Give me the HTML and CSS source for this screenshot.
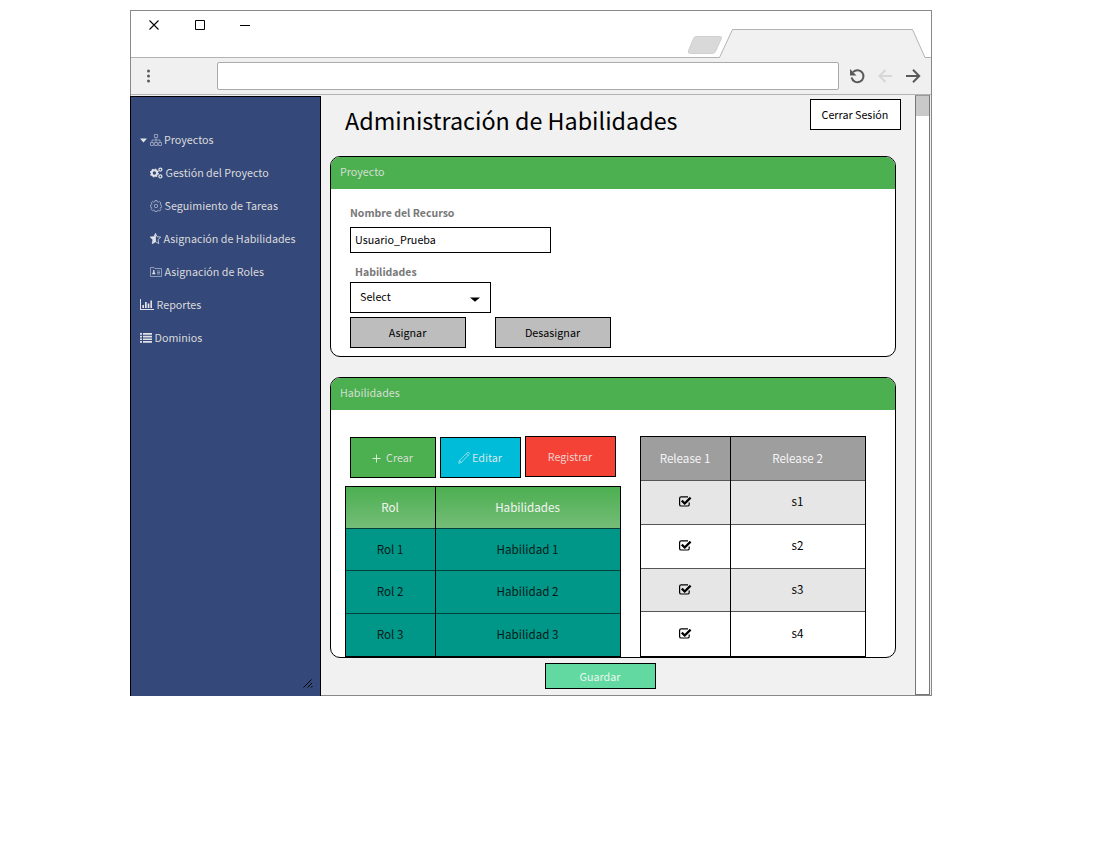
FILE: index.html
```html
<!DOCTYPE html>
<html lang="es">
<head>
<meta charset="utf-8">
<title>Administración de Habilidades</title>
<link rel="stylesheet" href="styles.css">
</head>
<body>
<div class="window">
  <div class="titlebar">
    <svg class="chrome" width="800" height="47" viewBox="0 0 800 47">
      <path d="M18.500 9.500l9 9m0-9l-9 9" stroke="#000" stroke-width="1.100" fill="none"/>
      <path d="M64.500 9.500h9v9h-9zM109 14.500h10" stroke="#000" fill="none"/>
      <path d="M564.500 25.500h24q3 0 2 2l-6 13q-1 2-3 2h-22q-3 0-2-3l5-12q1-2 2-2z" fill="#d9d9d9" stroke="#c4c4c4" stroke-width=".7"/>
      <path d="M0 46.500h588.500l13-28h180l12.500 28h6v.5H0z" fill="#f1f1f1"/>
      <path d="M0 46.500h588.500l13-28h180l12.500 28h6" fill="none" stroke="#b3b3b3"/>
    </svg>
  </div>
  <div class="toolbar">
    <svg class="dots" width="5" height="14" viewBox="0 0 5 14" fill="#5a5a5a"><circle cx="2.500" cy="2" r="1.500"/><circle cx="2.500" cy="7" r="1.500"/><circle cx="2.500" cy="12" r="1.500"/></svg>
    <div class="address"></div>
    <svg class="nav" width="74" height="18" viewBox="0 0 74 18" fill="none" stroke-width="2">
      <path d="M4 5.200A6 6 0 1 1 2.600 10.500" stroke="#5a5a5a"/><path d="M1 2v6.500h6.500z" fill="#5a5a5a"/>
      <path d="M43 9H30.500M36.500 3l-6 6 6 6" stroke="#d6d6d6"/>
      <path d="M57 9h13M64 2.800L70.200 9 64 15.200" stroke="#5a5a5a"/>
    </svg>
  </div>
  <div class="view">
    <nav class="sidebar">
      <a class="item"><svg class="caret" width="7" height="5" viewBox="0 0 7 5"><path d="M0 .5h7L3.500 4.500z" fill="#e4e4e4"/></svg><svg class="org" width="12" height="12" viewBox="0 0 12 12" fill="none" stroke="#a9b1c6" stroke-width=".8"><path d="M4.400.5h3.200v3H4.400zM.5 8.500h2.800v3H.5zM4.600 8.500h2.800v3H4.600zM8.700 8.500h2.800v3H8.700zM6 3.500v5M2 8.500V6h8v2.500"/></svg><span>Proyectos</span></a>
      <a class="item sub"><svg width="13" height="12" viewBox="0 0 13 12" fill="none" stroke="#e0e2e8"><circle cx="4.400" cy="6" r="2.700" stroke-width="2"/><circle cx="4.400" cy="6" r="3.900" stroke-width="1.200" stroke-dasharray="1.600 1.460"/><circle cx="10.400" cy="2.600" r="1.500" stroke-width="1.300"/><circle cx="10.400" cy="9.400" r="1.500" stroke-width="1.300"/></svg><span>Gestión del Proyecto</span></a>
      <a class="item sub"><svg width="12" height="12" viewBox="0 0 12 12" fill="none" stroke="#b4bbcd" stroke-width=".8"><path d="M5 .5h2l.3 1.400 1 .4 1.300-.8L11 2.900l-.8 1.200.4 1 1.200.3v1.800l-1.300.3-.4 1 .8 1.200-1.400 1.400-1.200-.8-1 .4L7 11.700H5l-.3-1.300-1-.4-1.200.8-1.400-1.400.8-1.200-.4-1L.3 7V5.200l1.300-.3.4-1-.8-1.200 1.400-1.300 1.200.8 1-.4z"/><circle cx="6" cy="6" r="1.700"/></svg><span>Seguimiento de Tareas</span></a>
      <a class="item sub"><svg width="11" height="11" viewBox="0 0 11 11"><path d="M5.500.3L7 3.700l3.700.4L8 6.700l.8 3.900-3.300-1.900-3.300 1.900L3 6.700.3 4.100 4 3.700z" fill="none" stroke="#e0e2e8" stroke-width=".8"/><path d="M5.900.3v8.400l-3.700 2L3 6.700.1 4 4 3.700z" fill="#e0e2e8"/></svg><span>Asignación de Habilidades</span></a>
      <a class="item sub"><svg width="12" height="10" viewBox="0 0 12 10"><path d="M.5 9.500v-9H4l.8 1h6.700v8z" fill="none" stroke="#a9b1c6" stroke-width=".8"/><circle cx="3.800" cy="4" r=".9" fill="#e0e2e8"/><path d="M2.200 7.200h3.200V6.500L4.300 5h-1l-1.100 1.500z" fill="#e0e2e8"/><path d="M7 4h3M7 5.500h3M7 7h3" stroke="#a9b1c6" stroke-width=".8"/></svg><span>Asignación de Roles</span></a>
      <a class="item"><svg class="bars" width="14" height="11" viewBox="0 0 14 11" fill="#e0e2e8"><path d="M0 0h1v10h13v1H0zM2.300 6h1.700v3H2.300zM5 3h1.700v6H5zM7.700 4.500h1.700v4.500H7.700zM10.400 1.500H12V9h-1.600z"/></svg><span>Reportes</span></a>
      <a class="item"><svg width="12" height="10" viewBox="0 0 12 10" fill="#e0e2e8"><path d="M0 0h2v1.700H0zM3 0h9v1.700H3zM0 2.700h2v1.700H0zM3 2.700h9v1.700H3zM0 5.400h2v1.700H0zM3 5.400h9v1.700H3zM0 8.100h2v1.700H0zM3 8.100h9v1.700H3z"/></svg><span>Dominios</span></a>
      <svg class="grip" width="10" height="9" viewBox="0 0 10 9" stroke="#000" fill="none"><path d="M.5 8.500l8-8M4.500 8.500l4.500-4.500M8 8.500l1.500-1.500"/></svg>
    </nav>
    <main class="content">
      <header class="heading"><h1>Administración de Habilidades</h1><button class="btn logout">Cerrar Sesión</button></header>
      <section class="panel project">
        <h2>Proyecto</h2>
        <div class="form">
          <label class="name-label">Nombre del Recurso</label>
          <div class="input">Usuario_Prueba</div>
          <label class="skill-label">Habilidades</label>
          <div class="select"><span>Select</span><svg width="10" height="5" viewBox="0 0 10 5"><path d="M0 .5h10L5 4.800z"/></svg></div>
          <div class="assign"><button class="btn">Asignar</button><button class="btn">Desasignar</button></div>
        </div>
      </section>
      <section class="panel skills">
        <h2>Habilidades</h2>
        <div class="columns">
          <div class="left">
            <div class="actions">
              <button class="btn create"><svg width="9" height="9" viewBox="0 0 9 9"><path d="M4.500.5v8M.5 4.500h8" stroke="#d8ead8"/></svg>Crear</button>
              <button class="btn edit"><svg width="12" height="12" viewBox="0 0 12 12" fill="none" stroke="#c3eef5" stroke-width=".7"><path d="M.7 11.300l.8-2.900 7.800-7.700q1-.7 1.700 0t0 1.700L3.500 10.300zM1.500 8.400l2 2M8.300 1.700l2 2"/></svg>Editar</button>
              <button class="btn register">Registrar</button>
            </div>
            <div class="grid roles">
              <b>Rol</b><b>Habilidades</b>
              <span>Rol 1</span><span>Habilidad 1</span>
              <span>Rol 2</span><span>Habilidad 2</span>
              <span>Rol 3</span><span>Habilidad 3</span>
            </div>
          </div>
          <div class="grid releases">
            <b>Release 1</b><b>Release 2</b>
            <span class="alt"><svg class="check" viewBox="0 0 13 11"><use href="#check"/></svg></span><span class="alt">s1</span>
            <span><svg class="check" viewBox="0 0 13 11"><use href="#check"/></svg></span><span>s2</span>
            <span class="alt"><svg class="check" viewBox="0 0 13 11"><use href="#check"/></svg></span><span class="alt">s3</span>
            <span><svg class="check" viewBox="0 0 13 11"><use href="#check"/></svg></span><span>s4</span>
          </div>
        </div>
      </section>
      <button class="btn save">Guardar</button>
    </main>
    <div class="scrollbar"><div class="thumb"></div></div>
  </div>
</div>
<svg width="0" height="0"><defs><g id="check" fill="none" stroke="#000"><path d="M9 .8H2.200Q.6.800.6 2.400v6q0 1.600 1.600 1.600h6.300q1.700 0 1.700-1.600V6.500" stroke-width="1.200"/><path d="M2.800 4.700l2.900 2.800 5.900-5.900" stroke-width="2.300"/></g></defs></svg>
</body>
</html>
```
FILE: styles.css
```css
* { box-sizing: border-box; }
body { margin: 0; background: #fff; font: 10.740px/18px "Noto Sans CJK SC", "Noto Sans", sans-serif; color: #000; }
svg { display: block; flex: none; }
.window { width: 802px; height: 686px; margin: 10px 0 0 130px; border: 1px solid #888; background: #f1f1f1; }
.titlebar { height: 47px; background: #fff; }
.toolbar { height: 37px; display: flex; align-items: center; border-bottom: 1px solid #b3b3b3; background: #f0f0f0; }
.dots { margin-left: 15px; }
.address { width: 622px; height: 28px; margin-left: 66px; border: 1px solid #aaa; border-radius: 2px; background: #fff; }
.nav { margin-left: 10px; }
.view { display: flex; height: 600px; }
.sidebar { flex: none; width: 191px; height: 601px; margin: 1px 0 0 -1px; padding: 26px 0 0 9px; border: 1px solid #000; background: #344879; color: #dcdcdc; display: flex; flex-direction: column; }
.item { height: 33px; flex: none; display: flex; align-items: center; gap: 2.500px; white-space: nowrap; }
.caret { margin-top: 2px; }
.sub { padding-left: 10px; }
.grip { margin: auto 7px 8px auto; }
.content { width: 594px; flex: none; padding: 4px 0 0 9px; }
.heading { display: flex; justify-content: space-between; height: 57px; padding: 0 14px 0 15px; }
h1 { margin: 2px 0 0; font-size: 23.340px; line-height: 38px; font-weight: 400; white-space: nowrap; }
.btn { display: flex; align-items: center; justify-content: center; margin: 0; padding: 0 1px 0 0; border: 1px solid #000; border-radius: 0; font: inherit; color: #000; white-space: nowrap; }
.logout { width: 91px; height: 31px; background: #fff; }
.panel { width: 566px; border: 1px solid #000; border-radius: 10px; background: #fff; overflow: hidden; }
.panel h2 { margin: 0; height: 32px; padding: 6px 9px; background: #4caf50; color: #d5dfd5; font-size: 10.740px; line-height: 18px; font-weight: 400; }
.project { height: 201px; }
.form { padding: 15px 19px 0; display: flex; flex-direction: column; align-items: flex-start; }
.form label { color: #777; font-size: 10.500px; font-weight: 700; line-height: 18px; }
.input { width: 201px; height: 26px; margin-top: 5px; padding: 3px 4px; border: 1px solid #000; }
.form .skill-label { margin: 10px 0 0 5px; }
.select { width: 141px; height: 31px; margin-top: 1px; padding: 0 10px 2px 9px; border: 1px solid #000; display: flex; align-items: center; justify-content: space-between; }
.select svg { margin-top: 5px; }
.assign { display: flex; gap: 29px; margin-top: 4px; }
.assign .btn { width: 116px; height: 31px; background: #bdbdbd; }
.skills { height: 281px; margin-top: 20px; }
.columns { display: flex; gap: 19px; padding: 26px 0 0 14px; }
.actions { display: flex; gap: 4px; padding-left: 5px; height: 50px; }
.actions .btn { height: 41px; margin-top: 1px; }
.create { width: 86px; gap: 5px; background: #4caf50; color: #d5dfd5; }
.create svg { margin-top: 1px; }
.edit { width: 81px; gap: 2px; background: #00bcd8; color: #d5e8eb; }
.actions .register { width: 91px; margin-top: 0; background: #f44336; color: #f3cfcc; }
.grid { display: grid; gap: 0 1px; padding: 1px; background: #000; font-size: 11.640px; }
.grid > * { display: flex; align-items: center; justify-content: center; font-weight: 400; padding: 0 1px 2px 0; }
.roles { width: 276px; grid-template: 41px 42px 43px 43px / 89px 184px; height: 171px; }
.roles b { color: #f5f5f5; background: linear-gradient(#4caf50, #75bd78); }
.roles span { background: #009688; color: #041b18; border-top: 1px solid #053f39; }
.releases { width: 226px; height: 221px; grid-template: 43px 44px 44px 43px 45px / 89px 134px; }
.releases b { background: #9e9e9e; color: #f5f5f5; }
.releases span { background: #fff; border-top: 1px solid #555; padding-bottom: 3px; }
.releases span:has(svg) { padding: 0 0 2px; }
.releases .alt { background: #e6e6e6; }
.check { width: 13px; height: 11px; }
.save { width: 111px; height: 26px; margin: 5px 0 0 215px; padding-top: 2px; background: #61d9a1; color: #e8f7ef; }
.scrollbar { width: 15px; height: 600px; border: 1px solid #777; border-top-color: #999; background: #fff; }
.thumb { height: 20px; background: #c9c9c9; }
```
